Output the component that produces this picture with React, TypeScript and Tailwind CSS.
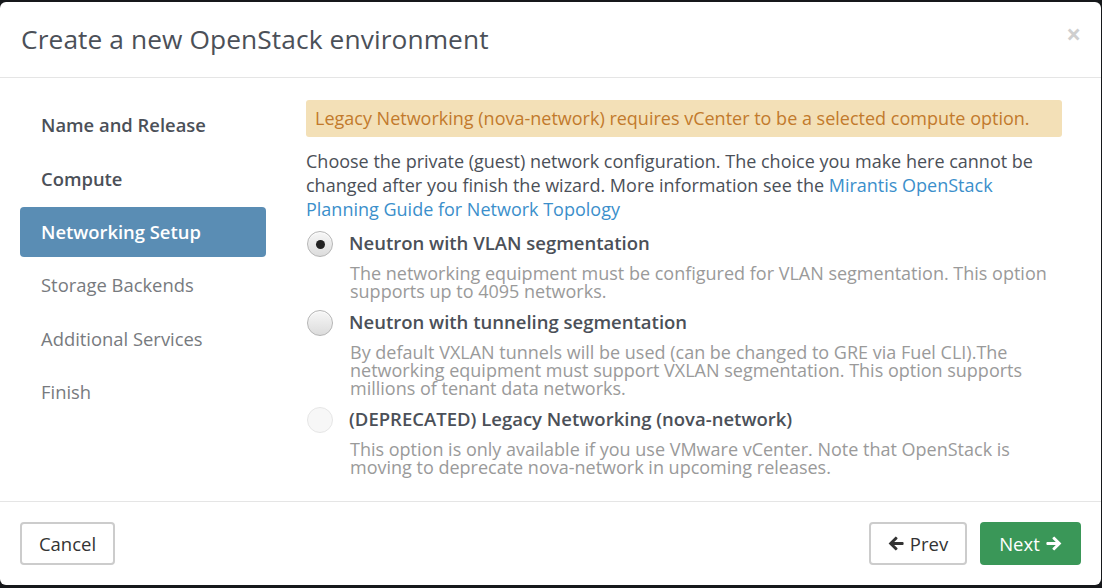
import React from 'react'

const STEPS = [
  { label: 'Name and Release', state: 'done' },
  { label: 'Compute', state: 'done' },
  { label: 'Networking Setup', state: 'active' },
  { label: 'Storage Backends', state: 'todo' },
  { label: 'Additional Services', state: 'todo' },
  { label: 'Finish', state: 'todo' },
]

const OPTIONS = [
  {
    label: 'Neutron with VLAN segmentation',
    text: 'The networking equipment must be configured for VLAN segmentation. This option supports up to 4095 networks.',
    checked: true,
    disabled: false,
  },
  {
    label: 'Neutron with tunneling segmentation',
    text: 'By default VXLAN tunnels will be used (can be changed to GRE via Fuel CLI).The networking equipment must support VXLAN segmentation. This option supports millions of tenant data networks.',
    checked: false,
    disabled: false,
  },
  {
    label: '(DEPRECATED) Legacy Networking (nova-network)',
    text: 'This option is only available if you use VMware vCenter. Note that OpenStack is moving to deprecate nova-network in upcoming releases.',
    checked: false,
    disabled: true,
  },
]

function Radio({ checked, disabled }: { checked: boolean; disabled: boolean }) {
  return (
    <span
      className={
        disabled
          ? 'h-[26px] w-[26px] shrink-0 rounded-full border border-[#e6e6e6] bg-[#f7f7f7] flex items-center justify-center'
          : 'h-[26px] w-[26px] shrink-0 rounded-full border border-[#b5b5b5] bg-gradient-to-b from-[#f7f7f7] to-[#dcdcdc] shadow-[inset_0_1px_1px_rgba(255,255,255,0.8)] flex items-center justify-center'
      }
    >
      {checked && <span className="h-[9px] w-[9px] rounded-full bg-[#222]" />}
    </span>
  )
}

function Arrow({ dir }: { dir: 'left' | 'right' }) {
  return (
    <svg width="16" height="15" viewBox="0 0 16 15" className={dir === 'right' ? 'rotate-180' : ''}>
      <path d="M0.6 7.5 L7.2 0.9 Q7.8 0.3 8.4 0.9 L9.3 1.8 Q9.9 2.4 9.3 3 L6.2 5.9 H14.6 Q15.6 5.9 15.6 6.9 V8.1 Q15.6 9.1 14.6 9.1 H6.2 L9.3 12 Q9.9 12.6 9.3 13.2 L8.4 14.1 Q7.8 14.7 7.2 14.1 Z" fill="currentColor" />
    </svg>
  )
}

export default function App() {
  return (
    <div className="w-[1102px] h-[588px] bg-[#16181b] pt-[2px] font-['Open_Sans',sans-serif]">
      <div className="h-[583px] w-[1101px] bg-white rounded-[6px] flex flex-col overflow-hidden">
        {/* Header */}
        <div className="h-[76px] shrink-0 border-b border-[#e5e5e5] flex items-center justify-between pl-[21px] pr-[20px]">
          <h1 className="text-[26.3px] text-[#4b5058] tracking-[0.1px]">Create a new OpenStack environment</h1>
          <span className="text-[26px] font-bold text-[#cfcfcf] leading-none -mt-[12px]">×</span>
        </div>

        {/* Body */}
        <div className="flex-1 flex pt-[22px] pl-[20px] pr-[39px]">
          <div className="w-[246px] shrink-0 flex flex-col gap-[3.4px]">
            {STEPS.map((s) => (
              <div
                key={s.label}
                className={
                  s.state === 'active'
                    ? 'h-[50px] flex items-center px-[21px] rounded-[4px] bg-[#5a8db4] text-white text-[18.4px] font-semibold'
                    : s.state === 'done'
                    ? 'h-[50px] flex items-center px-[21px] text-[#4b5058] text-[18.4px] font-semibold'
                    : 'h-[50px] flex items-center px-[21px] text-[#777a7e] text-[18.4px]'
                }
              >
                {s.label}
              </div>
            ))}
          </div>

          <div className="flex-1 ml-[40px]">
            <div className="h-[37px] rounded-[3px] bg-[#f3e0b7] text-[#c27a2c] text-[18px] flex items-center px-[9px]">
              Legacy Networking (nova-network) requires vCenter to be a selected compute option.
            </div>
            <p className="mt-[12px] text-[18px] leading-[24px] text-[#4b5058]">
              Choose the private (guest) network configuration. The choice you make here cannot be changed after you finish the wizard. More information see the{' '}
              <span className="text-[#3b8fcb]">Mirantis OpenStack Planning Guide for Network Topology</span>
            </p>

            <div className="mt-[10px] flex flex-col gap-[10px]">
              {OPTIONS.map((o) => (
                <div key={o.label}>
                  <div className="flex items-center h-[26px] gap-[16px] pl-[1px]">
                    <Radio checked={o.checked} disabled={o.disabled} />
                    <span className="text-[18.5px] font-semibold text-[#4b5058] -mt-[2px]">{o.label}</span>
                  </div>
                  <p className="mt-[7px] pl-[44px] text-[18px] leading-[18px] text-[#9a9a9a]">{o.text}</p>
                </div>
              ))}
            </div>
          </div>
        </div>

        {/* Footer */}
        <div className="h-[84px] shrink-0 border-t border-[#e5e5e5] flex items-start justify-between px-[20px] pt-[20px]">
          <button className="h-[43px] w-[95px] rounded-[4px] border-2 border-[#cccccc] text-[18.5px] text-[#333] bg-white">
            Cancel
          </button>
          <div className="flex gap-[13px]">
            <button className="h-[43px] w-[98px] rounded-[4px] border-2 border-[#cccccc] text-[18.5px] text-[#333] bg-white flex items-center justify-center gap-[6px]">
              <Arrow dir="left" />
              Prev
            </button>
            <button className="h-[43px] w-[101px] rounded-[4px] bg-[#3a9758] text-[18.5px] text-white flex items-center justify-center gap-[6px]">
              Next
              <Arrow dir="right" />
            </button>
          </div>
        </div>
      </div>
    </div>
  )
}
